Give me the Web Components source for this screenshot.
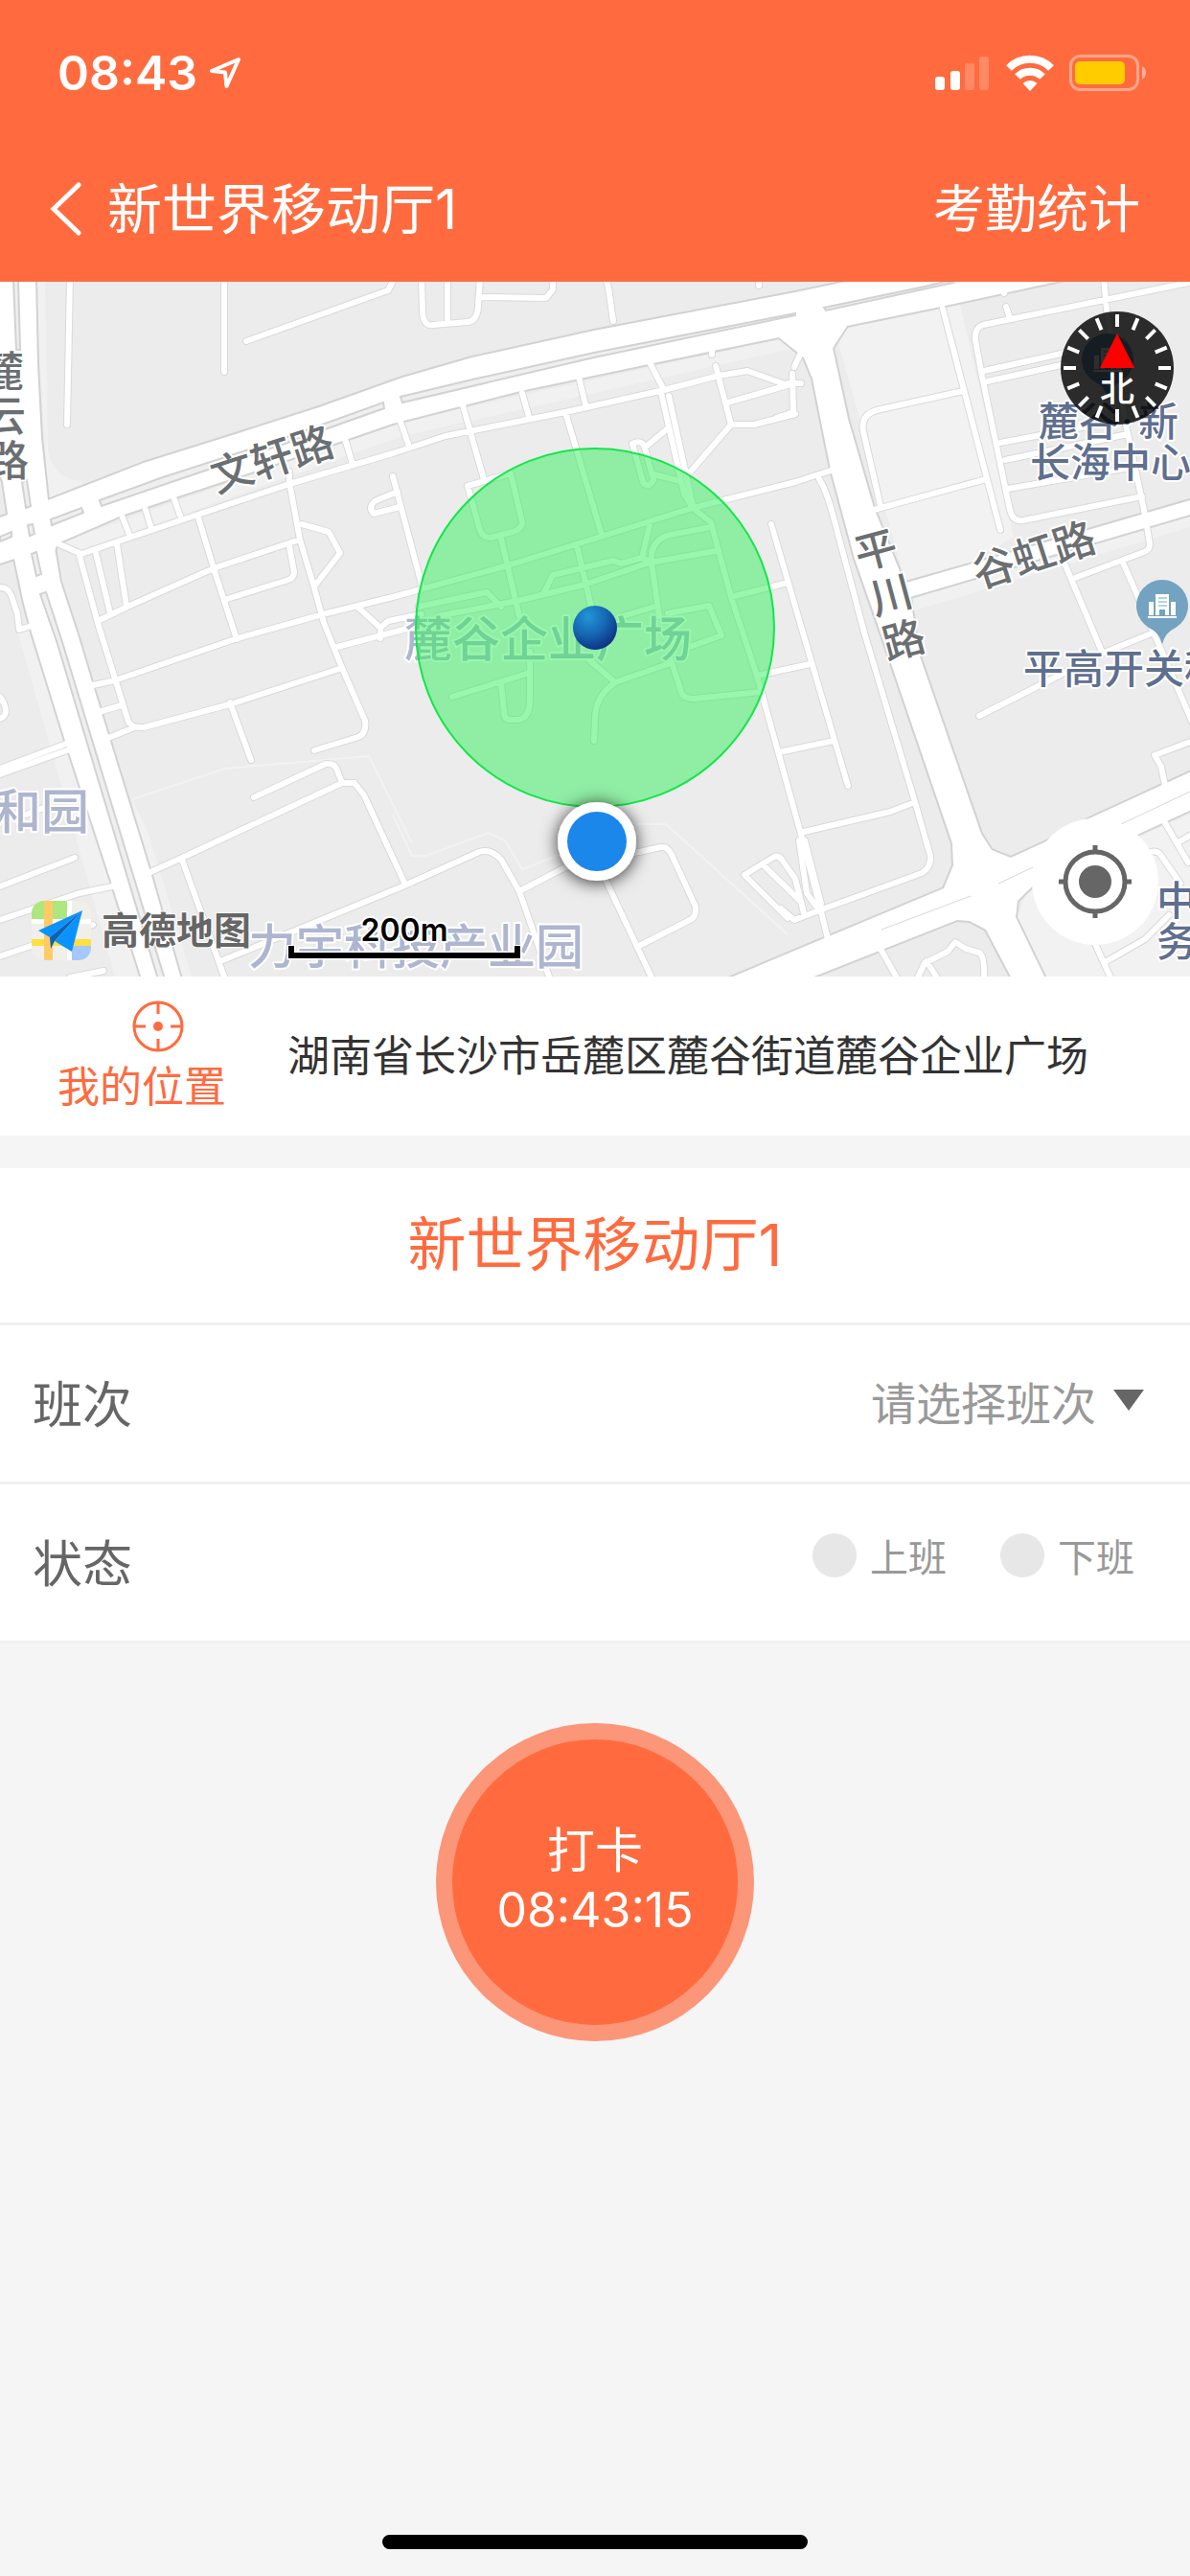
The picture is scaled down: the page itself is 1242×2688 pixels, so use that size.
<!DOCTYPE html>
<html lang="zh-CN">
<head>
<meta charset="utf-8">
<meta name="viewport" content="width=device-width, initial-scale=1">
<title>考勤打卡</title>
<style>
  :root {
    --brand: #ff6b3f;
    --page: #f5f5f5;
    --line: #f0f0f0;
    --dark: #333;
    --mid: #666;
    --light: #999;
  }

  body {
    margin: 0;
    min-height: 100vh;
    display: flex;
    flex-direction: column;
    background: var(--page);
    font-family: Inter, "Noto Sans CJK SC", sans-serif;
  }
</style>
</head>
<body>

<status-bar>08:43</status-bar>
<nav-bar>
  新世界移动厅1
  <span slot="action">考勤统计</span>
</nav-bar>
<map-view>
  <map-compass>北</map-compass>
  <locate-button></locate-button>
</map-view>
<location-bar>湖南省长沙市岳麓区麓谷街道麓谷企业广场</location-bar>
<shift-form>新世界移动厅1</shift-form>
<punch-button time="08:43:15">打卡</punch-button>
<home-indicator></home-indicator>

<script>
// small helper: every element clones its markup into an open root
function define(name, html, setup) {
  const template = document.createElement("template");
  template.innerHTML = html;

  customElements.define(name, class extends HTMLElement {
    connectedCallback() {
      if (this.shadowRoot) return;
      this.root = this.attachShadow({ mode: "open" });
      this.root.appendChild(template.content.cloneNode(true));
      if (setup) setup(this, this.root);
    }
  });
}

define("status-bar", `
  <style>
    :host {
      display: flex;
      justify-content: space-between;
      align-items: center;
      box-sizing: border-box;
      height: 144px;
      padding: 8px 44px 0 60px;
      background: var(--brand);
      color: #fff;
      font-size: 50px;
      font-weight: 600;
    }
    div { display: flex; align-items: center; gap: 12px; }
    .icons { gap: 16px; }
    svg { display: block; }
  </style>
  <div>
    <slot></slot>
    <svg width="34" height="34" viewBox="0 0 34 34">
      <path d="M31 3 L3 15 L17 16.500 L18.500 31 Z" fill="none" stroke="#fff" stroke-width="4" stroke-linejoin="round"/>
    </svg>
  </div>
  <div class="icons">
    <svg width="58" height="38" viewBox="0 0 58 38" fill="#fff">
      <rect x="0" y="23" width="10" height="14" rx="3"/>
      <rect x="16" y="17" width="10" height="20" rx="3"/>
      <rect x="31" y="9" width="10" height="28" rx="3" opacity=".2"/>
      <rect x="46" y="2" width="10" height="35" rx="3" opacity=".2"/>
    </svg>
    <svg width="50" height="38" viewBox="0 0 50 38" fill="none" stroke="#fff" stroke-width="8">
      <path d="M3 14 A31 31 0 0 1 47 14"/>
      <path d="M12 23 A18.500 18.500 0 0 1 38 23"/>
      <path d="M25 38 L17.500 30 A11 11 0 0 1 32.500 30 Z" fill="#fff" stroke="none"/>
    </svg>
    <svg width="82" height="38" viewBox="0 0 82 38">
      <rect x="1.500" y="1.500" width="70" height="35" rx="10" fill="none" stroke="#fff" stroke-opacity=".4" stroke-width="3"/>
      <rect x="6" y="7" width="52" height="24" rx="5" fill="#ffcc00"/>
      <path d="M76 12 Q80 14 80 19 Q80 24 76 26 Z" fill="#fff" opacity=".45"/>
    </svg>
  </div>
`);

define("nav-bar", `
  <style>
    :host {
      display: flex;
      justify-content: space-between;
      align-items: center;
      height: 150px;
      padding: 0 52px;
      background: var(--brand);
      color: #fff;
    }
    button {
      border: 0;
      padding: 0;
      background: none;
      color: inherit;
    }
    .left { display: flex; align-items: center; gap: 26px; }
    svg { display: block; }
    h1 { margin: 0; font-size: 57px; font-weight: 400; line-height: 80px; }
    a { color: inherit; text-decoration: none; font-size: 54px; line-height: 80px; }
  </style>
  <div class="left">
    <button aria-label="返回">
      <svg width="34" height="58" viewBox="0 0 34 58">
        <path d="M30 3 L4 28 L30 53" fill="none" stroke="#fff" stroke-width="5" stroke-linecap="round"/>
      </svg>
    </button>
    <h1><slot></slot></h1>
  </div>
  <a href="#stats"><slot name="action"></slot></a>
`);

// map geometry, in page units (the map starts at y = 294)
const WIDE_ROADS = [
  // 文轩路
  "0,540 50,522 150,483 233,457 333,425 420,394 493,373 620,345 830,305 892,292 1112,292 982,320 884,340 869,363 847,393 839,373 813,352 677,380 543,408 410,442 250,497 180,520 127,538 60,567 57,575 15,583 0,588",
  // 麓云路
  "-5,290 37,290 39,380 43,457 50,522 57,572 63,607 82,665 97,715 157,910 190,1025 149,1025 115,917 68,773 33,660 25,630 15,583 8,536 3,503 -5,480",
  // 平川路
  "836,330 884,340 869,363 885,437 912,530 950,623 959,682 1024,870 1035,887 1055,895 1075,888 1077,925 1062,940 1060,957 1093,1025 1058,1025 1029,970 1000,940 985,927 995,903 994,880 919,660 892,583 867,490 847,390",
  // 谷虹路
  "935,611 1019,587 1242,522 1250,520 1250,535 1242,537 950,623",
  // the road along the bottom
  "758,1022 822,995 985,927 1055,895 1092,878 1139,853 1250,802 1250,842 1189,870 1077,925 1029,970 1012,961 999,960 842,1022"
];

const MEDIANS = [
  "0,565 12,560 12,555 0,560", "53,542 85,530 87,535 54,548", "104,522 170,498 300,456 400,420 401,426 300,462 170,506 106,528",
  "418,414 493,396 620,368 830,327 830,329 620,373 420,420", "860,321 965,299 990,293 995,295 862,324",
  "14,293 19,293 21,365 17,365", "23,503 28,501 32,528 27,530", "29,548 34,547 36,557 31,559",
  "33,578 38,576 43,599 38,601", "42,620 48,618 65,670 172,1022 165,1022 60,672"
];

const STREETS = [
  "M73,290 L70,443", "M234,290 V388", "M257,356 L405,303 L412,290",
  "M62,568 L85,578 L120,566 L302,505 L410,473 L465,455 L590,430 L693,407 L750,392 L780,387 L822,402",
  "M128,540 L135,558 M152,532 L158,552 M182,521 L189,541 M360,458 L368,484 M302,492 V505",
  "M418,440 L427,466 M483,423 L505,500 M545,410 L552,435 M605,397 L611,422 M679,380 L693,407 M590,430 L628,558",
  "M83,580 L102,650 L133,750 Q135,760 150,759 L240,735 L357,697 M113,770 L138,760",
  "M100,577 L115,640 M122,568 L132,633 M102,648 L133,633 L223,593 L313,563",
  "M207,540 L223,593 L247,667",
  "M302,503 L313,563 L327,610 L338,650 L357,697 L381,752 Q383,765 374,769 L328,783",
  "M315,547 L343,555 L355,577 L328,612 M302,570 L307,597 Q307,604 298,606 L237,625",
  "M97,715 L120,710 L245,667 L337,641 L410,623 L530,590 L627,560 L723,530 L830,503 L867,491",
  "M352,675 L440,652 M373,633 L397,655 L405,648 L440,641 M397,655 V666",
  "M103,743 L127,736 M240,733 L262,793",
  "M265,832 L340,797 Q350,796 352,804 L357,817",
  "M157,910 L190,895 L357,817 L370,817 L380,830 L423,923",
  "M190,897 L235,1022 M230,1003 L420,925 L500,889 Q512,885 523,897 L542,930 L574,1022",
  "M542,930 L590,905 L690,884 Q697,883 701,892 L726,946 Q727,957 720,960 L667,987",
  "M633,920 L681,1022",
  "M0,802 L72,775 M0,808 L73,782 M0,925 L78,895 M0,960 L83,932 L117,925 M0,998 L97,965 M73,1020 L108,1013 M27,850 L48,842",
  "M0,613 Q9,613 12,622 L18,640 L20,657 L33,653 M0,727 Q12,745 0,750",
  "M410,497 L440,610 M415,513 L391,523 Q384,530 390,536 L417,529",
  "M440,290 L441,325 Q442,341 452,339 L488,336 Q498,335 499,320 L501,290 M467,290 V337 M500,310 L570,311 L577,302 V290 M632,290 L635,300 L640,335",
  "M488,507 L533,494 L545,545 Q545,552 535,555 L512,561 Q502,561 500,550 Z M522,558 L542,643",
  "M660,463 L671,503 Q676,511 682,501 L673,467 Q670,458 660,463 M673,467 L697,447",
  "M690,410 L714,515 L723,530 M698,413 L723,527 M682,495 L710,502",
  "M747,382 L763,443 H787 L830,432 M763,443 L720,493 M760,420 L822,402",
  "M723,530 L742,545 L763,623 L790,705 L835,867 L855,943 L864,980",
  "M763,623 L822,608 M805,547 L835,650 L885,820 M790,705 L845,693 M813,785 L870,773",
  "M700,688 L711,722 Q713,729 724,729 L793,722 M613,687 L642,712 L700,692 M642,712 Q621,727 621,750 L620,773",
  "M472,727 L553,702 V733 Q552,750 540,751 H532 Q526,751 526,742 L523,713 M553,702 V680",
  "M437,633 L508,618 L523,633 M457,643 L540,627 L610,610 L678,587 L747,575",
  "M567,620 L577,600 L640,585 L648,588 L670,582 L678,548 M603,573 L617,633 M670,582 L680,587",
  "M680,587 Q678,563 700,558 L742,550 M680,587 L688,643 M650,643 L683,633 M697,640 L740,632 L753,663 L720,675",
  "M984,322 L1044,553 M1048,306 V302 M1050,320 L1054,332",
  "M1250,293 L1026,339 Q1017,342 1018,355 L1025,393 L1054,532 Q1057,545 1068,543 L1192,518",
  "M1152,290 L1155,323 L1175,443 L1195,537 L1200,568 Q1200,574 1194,576 L1122,603 M1112,590 L1150,680",
  "M1027,387 L1112,368 M1030,398 L1112,380 M1044,462 L1160,440 M1049,480 L1177,453 M1052,510 L1185,487",
  "M1005,408 L915,428 Q898,433 901,450 L919,528 M912,532 L1029,500",
  "M855,500 Q862,510 870,540 L902,660 L955,837 L971,893 Q972,905 962,911 L932,922 L855,950 L829,960 L815,948",
  "M839,868 L929,847 L955,837 M834,877 L842,932 L855,950 M840,877 L857,943",
  "M777,913 L808,894 Q814,892 818,900 L830,917 L839,953 M777,913 L822,958 M797,903 L835,940",
  "M1172,587 L1204,660 L1150,682 L1099,708 L1022,747 M1204,660 L1245,755",
  "M1245,773 L1205,788 L1212,800 L1216,820 M1215,857 L1240,900 M1228,880 L1245,870 M1198,890 Q1208,886 1212,893 L1232,922",
  "M1144,987 L1160,1022 M1155,1003 L1195,980 L1220,955",
  "M919,990 L937,1022 M957,1022 L965,1005 L989,993 L997,983 L1008,990 L1022,994 Q1028,998 1027,1022 M967,1003 L979,1022",
  "M829,383 L835,370 M822,400 L836,400 M827,390 L828,430 L810,436 M743,365 V370 M792,290 V298"
];

const pin = (x, y) => `
  <g transform="translate(${x} ${y})">
    <path d="M0 40 Q-3 28 -14 23 A27 27 0 1 1 14 23 Q3 28 0 40 Z" fill="#73a3c0"/>
    <path d="M-14 -4 h5 v14 h-5 z M9 -4 h5 v14 h-5 z M-7 -12 h14 v22 h-4 v-6 h-6 v6 h-4 z M-15 11 h30 v2 h-30 z" fill="#fff"/>
    <path d="M-4 -8 h9 M-4 -4 h9 M-4 0 h9" stroke="#73a3c0" stroke-width="1"/>
  </g>`;

define("map-view", `
  <style>
    :host { display: block; position: relative; background: #ececec; }
    svg { display: block; width: 100%; height: auto; }
    text { paint-order: stroke; stroke: #fff; stroke-width: 4px; stroke-linejoin: round; }
    .road { font-size: 44px; fill: #6b6f72; font-weight: 500; }
    .place { font-size: 42px; fill: #5f6f8f; font-weight: 500; }
    .area { font-size: 50px; fill: #aeb6cf; font-weight: 500; }
    .scale { font-size: 32px; fill: #000; font-weight: 600; text-anchor: middle; }
    .wordmark { font-size: 39px; fill: #666; font-weight: 700; stroke-width: 2px; }
    ::slotted(map-compass) { position: absolute; top: 31px; right: 17px; }
    ::slotted(locate-button) { position: absolute; bottom: 33px; right: 33px; }
  </style>
  <svg viewBox="0 294 1242 725" role="img" aria-label="地图">
    <defs>
      <radialGradient id="ball" cx=".35" cy=".25" r=".8">
        <stop offset="0" stop-color="#2196d6"/>
        <stop offset=".5" stop-color="#1668b4"/>
        <stop offset="1" stop-color="#0d2f80"/>
      </radialGradient>
      <filter id="shadow" x="-50%" y="-50%" width="200%" height="200%">
        <feDropShadow dx="0" dy="2" stdDeviation="9" flood-color="#000" flood-opacity=".8"/>
      </filter>
      <clipPath id="tile"><rect x="33" y="940" width="62" height="62" rx="13"/></clipPath>
    </defs>
    <rect y="294" width="1242" height="725" fill="#ececec"/>
    <path d="M870 340 L1002 318 L1058 560 L950 625 Z M1062 957 L1075 920 L1242 850 V1019 H1090 Z" fill="#f2f2f2"/>
    <path d="M37 294 H47 L50 470 Q55 500 88 503 L50 522 Z M60 567 L420 440 L830 350 L835 362 L420 455 L83 575 Z M950 623 L1242 537 V550 L955 637 Z M138 834 L155 870 L200 1019 H190 L138 850 Z M18 657 L30 655 L147 1019 H120 Z" fill="#f1f1f1"/>
    <path d="M138 834 L235 802 L385 789 L430 880 M410 850 L430 893 H445 L510 869 L527 877 L545 907 L590 890 M665 860 H695 L822 975" fill="none" stroke="#f2f2f2" stroke-width="2"/>
    <g id="casing" fill="#d2d2d2" stroke="#d2d2d2" stroke-linejoin="round" stroke-linecap="round"></g>
    <g id="surface" fill="#fff" stroke="#fff" stroke-linejoin="round" stroke-linecap="round"></g>
    <g id="medians" fill="#efefef" stroke="#d2d2d2" stroke-width="2"></g>
    <path d="M1042 922 L1078 905 M920 970 L1013 935 M1170 860 L1242 826" stroke="#d8d8d8" stroke-width="1"/>

    <text class="area" x="422" y="685">麓谷企业广场</text>
    <text class="area" x="-7" y="865">和园</text>
    <text class="area" x="259" y="1006">力宇科技产业园</text>
    <text class="road" x="-19 -17 -14" y="404 450 497">麓云路</text>
    <text class="road" transform="translate(284 479) rotate(-18)" x="-66" y="16">文轩路</text>
    <text class="road" transform="translate(1079 579) rotate(-18)" x="-66" y="16">谷虹路</text>
    <text class="road" x="897 913 926" y="595 642 689" rotate="-15">平川路</text>
    ${pin(1156, 375)}
    <text class="place" x="1084 1126 1170 1188" y="455">麓谷·新</text>
    <text class="place" x="1075" y="498">长海中心</text>
    ${pin(1213, 632)}
    <text class="place" x="1068" y="713">平高开关科</text>
    <text class="place" x="1207" y="955">中</text>
    <text class="place" x="1207" y="998">务</text>

    <circle cx="621" cy="655" r="187" fill="#31ed5b" fill-opacity=".5" stroke="#14e64b" stroke-width="2"/>
    <circle cx="621" cy="655" r="23" fill="url(#ball)"/>
    <circle cx="623" cy="878" r="41" fill="#fff" filter="url(#shadow)"/>
    <circle cx="623" cy="878" r="31" fill="#1b87ea"/>

    <g clip-path="url(#tile)">
      <rect x="33" y="940" width="62" height="62" fill="#f1efe9"/>
      <path d="M33 940 H70 V959 H33 Z" fill="#aee67f"/>
      <path d="M70 940 h5 v62 h-5 Z M33 959 h62 v5 h-62 Z" fill="#fff"/>
      <path d="M33 980 h62 v7 h-62 Z" fill="#ffe03d"/>
      <path d="M75 987 h20 v15 h-20 Z" fill="#a5c8ff"/>
      <path d="M46 940 h9 v62 h-9 Z" fill="#ffcb66"/>
      <path d="M86 950 L40 971 L52 978 Z M86 950 L57 982 L75 993 Z" fill="#0a93ff"/>
      <path d="M86 950 L52 978 L53 990 L57 982 Z" fill="#0a63b4"/>
    </g>
    <text class="wordmark" x="106" y="985">高德地图</text>
    <path d="M304 986 V997 H540 V986" fill="none" stroke="#fff" stroke-width="9"/>
    <path d="M304 987 V997 H540 V987" fill="none" stroke="#000" stroke-width="6"/>
    <text class="scale" x="422" y="982">200m</text>
  </svg>
  <slot></slot>
`, (host, root) => {
  const wide = WIDE_ROADS.map(p => `<polygon points="${p}"/>`).join("");
  const narrow = STREETS.join(" ");
  root.getElementById("casing").innerHTML =
    `<g stroke-width="4">${wide}</g><path d="${narrow}" fill="none" stroke="#d9d9d9" stroke-width="8"/>`;
  root.getElementById("surface").innerHTML =
    `<g stroke-width="0">${wide}</g><path d="${narrow}" fill="none" stroke-width="6"/>`;
  root.getElementById("medians").innerHTML =
    MEDIANS.map(p => `<polygon points="${p}"/>`).join("");
});

define("map-compass", `
  <style>
    :host {
      display: flex;
      justify-content: center;
      align-items: flex-end;
      box-sizing: border-box;
      width: 118px;
      height: 118px;
      padding-bottom: 15px;
      border-radius: 50%;
      background: rgba(0, 0, 0, 0.82);
      color: #fff;
      font-size: 36px;
      font-weight: 500;
      line-height: 44px;
    }
    svg { position: absolute; inset: 0; }
  </style>
  <svg width="118" height="118" viewBox="-59 -59 118 118">
    <g id="ticks" stroke="#fff" stroke-width="4"></g>
    <path d="M0 -36 L18 0 H-18 Z" fill="#f00"/>
  </svg>
  <slot></slot>
`, (host, root) => {
  let ticks = "";
  for (let i = 0; i < 16; i++) {
    ticks += `<path d="M0 -56 V-43" transform="rotate(${i * 22.5})"/>`;
  }
  root.getElementById("ticks").innerHTML = ticks;
});

define("locate-button", `
  <style>
    :host { display: block; }
    button {
      display: block;
      border: 0;
      padding: 0;
      border-radius: 50%;
      background: #fff;
    }
    svg { display: block; }
  </style>
  <button aria-label="定位">
    <svg width="132" height="132" viewBox="-66 -66 132 132" stroke="#666" stroke-width="5" fill="none">
      <circle r="31"/>
      <path d="M0 -38 V-29 M0 38 V29 M-38 0 H-29 M38 0 H29"/>
      <circle r="17" fill="#666" stroke="none"/>
    </svg>
  </button>
`);

define("location-bar", `
  <style>
    :host {
      display: flex;
      align-items: center;
      gap: 64px;
      box-sizing: border-box;
      height: 166px;
      padding: 0 60px;
      background: #fff;
      color: var(--dark);
      font-size: 44px;
      line-height: 60px;
    }
    button {
      display: flex;
      flex-direction: column;
      align-items: center;
      gap: 6px;
      flex: none;
      border: 0;
      padding: 4px 0 0;
      background: none;
      color: var(--brand);
      font: inherit;
      line-height: 60px;
    }
    svg { display: block; margin-left: 34px; }
  </style>
  <button>
    <svg width="54" height="54" viewBox="-27 -27 54 54" fill="none" stroke="#ff6b3f" stroke-width="3">
      <circle r="25"/>
      <path d="M0 -25 V-13 M0 25 V13 M-25 0 H-13 M25 0 H13"/>
      <circle r="5" fill="#ff6b3f" stroke="none"/>
    </svg>
    我的位置
  </button>
  <slot></slot>
`);

define("form-row", `
  <style>
    :host {
      display: flex;
      justify-content: space-between;
      align-items: center;
      box-sizing: border-box;
      height: 166px;
      padding: 0 48px 4px 34px;
      border-bottom: 3px solid var(--line);
      color: var(--mid);
      font-size: 52px;
    }
  </style>
  <slot name="label"></slot>
  <slot></slot>
`);

define("shift-form", `
  <style>
    :host { display: block; margin-top: 34px; background: #fff; }
    h2 {
      margin: 0;
      height: 161px;
      border-bottom: 3px solid var(--line);
      color: var(--brand);
      font-size: 61px;
      font-weight: 400;
      line-height: 161px;
      text-align: center;
    }
    .select { display: flex; align-items: center; gap: 18px; padding-top: 4px; }
    .select::after {
      content: "";
      border: 16px solid transparent;
      border-top: 22px solid var(--mid);
      border-bottom: 0;
      margin-bottom: 8px;
    }
    select {
      appearance: none;
      border: 0;
      padding: 0;
      background: none;
      color: var(--light);
      font: inherit;
      font-size: 47px;
    }
    fieldset {
      display: flex;
      gap: 56px;
      margin: 0;
      border: 0;
      padding: 0 10px 12px 0;
      color: var(--light);
      font-size: 40px;
    }
    fieldset label { display: flex; align-items: center; gap: 14px; }
    input {
      appearance: none;
      width: 46px;
      height: 46px;
      margin: 0;
      border-radius: 50%;
      background: #e7e7e7;
    }
    input:checked { background: var(--brand); }
  </style>
  <h2><slot></slot></h2>
  <form-row>
    <label slot="label" for="shift">班次</label>
    <div class="select">
      <select id="shift"><option>请选择班次</option></select>
    </div>
  </form-row>
  <form-row>
    <span slot="label" id="state">状态</span>
    <fieldset aria-labelledby="state">
      <label><input type="radio" name="state" value="on">上班</label>
      <label><input type="radio" name="state" value="off">下班</label>
    </fieldset>
  </form-row>
`);

define("punch-button", `
  <style>
    :host { display: flex; justify-content: center; padding-top: 83px; }
    button {
      display: flex;
      flex-direction: column;
      align-items: center;
      justify-content: center;
      box-sizing: border-box;
      width: 332px;
      height: 332px;
      border: 17px solid #fc9679;
      border-radius: 50%;
      padding: 0 0 4px;
      background: var(--brand);
      color: #fff;
      font: inherit;
      font-size: 50px;
      line-height: 62px;
    }
  </style>
  <button>
    <slot></slot>
    <time></time>
  </button>
`, (host, root) => {
  root.querySelector("time").textContent = host.getAttribute("time");
});

define("home-indicator", `
  <style>
    :host { display: flex; justify-content: center; margin-top: auto; padding: 28px 0; }
    div { width: 444px; height: 15px; border-radius: 8px; background: #000; }
  </style>
  <div></div>
`);
</script>
</body>
</html>
